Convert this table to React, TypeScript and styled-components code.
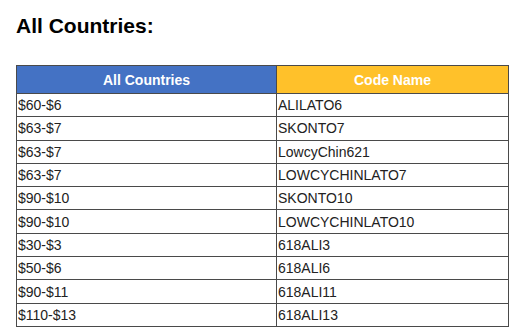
import React from 'react'
import styled, { createGlobalStyle } from 'styled-components'

const GlobalStyle = createGlobalStyle`
  body {
    margin: 0;
    background: #ffffff;
    font-family: "Liberation Sans", Arial, sans-serif;
  }
`

const rows = [
  { price: '$60-$6', code: 'ALILATO6' },
  { price: '$63-$7', code: 'SKONTO7' },
  { price: '$63-$7', code: 'LowcyChin621' },
  { price: '$63-$7', code: 'LOWCYCHINLATO7' },
  { price: '$90-$10', code: 'SKONTO10' },
  { price: '$90-$10', code: 'LOWCYCHINLATO10' },
  { price: '$30-$3', code: '618ALI3' },
  { price: '$50-$6', code: '618ALI6' },
  { price: '$90-$11', code: '618ALI11' },
  { price: '$110-$13', code: '618ALI13' },
]

const Page = styled.div`
  padding: 14px 10px 0 16px;
`

const Title = styled.h2`
  margin: 0 0 27px;
  font-size: 21px;
  line-height: 24px;
  font-weight: 700;
  color: #000;
`

const Table = styled.table`
  border-collapse: collapse;
  width: 492px;
  table-layout: fixed;
`

const HeadCell = styled.th<{ $bg: string }>`
  background: ${p => p.$bg};
  color: #fff;
  font-size: 14px;
  font-weight: 700;
  height: 27px;
  padding: 0;
  text-align: center;
  border: 1.5px solid #4a4a4a;
`

const Cell = styled.td`
  font-size: 14px;
  color: #222;
  height: 22.3px;
  padding: 0 0 0 1px;
  line-height: 22px;
  border: 1.5px solid #4a4a4a;
  white-space: nowrap;
`

export default function App() {
  return (
    <Page>
      <GlobalStyle />
      <Title>All Countries:</Title>
      <Table>
        <colgroup>
          <col style={{ width: 260 }} />
          <col style={{ width: 232 }} />
        </colgroup>
        <thead>
          <tr>
            <HeadCell $bg="#4472c4">All Countries</HeadCell>
            <HeadCell $bg="#ffc12a">Code Name</HeadCell>
          </tr>
        </thead>
        <tbody>
          {rows.map((r, i) => (
            <tr key={i}>
              <Cell>{r.price}</Cell>
              <Cell>{r.code}</Cell>
            </tr>
          ))}
        </tbody>
      </Table>
    </Page>
  )
}
